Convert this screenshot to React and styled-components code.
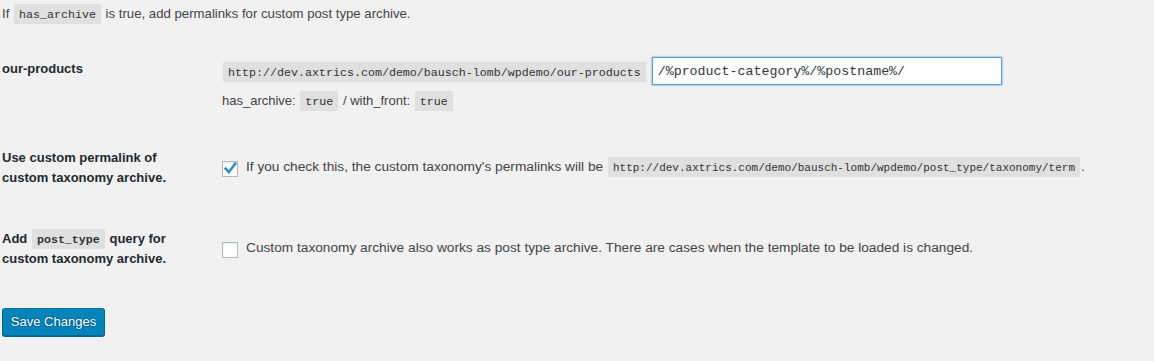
import React from "react";
import styled, { createGlobalStyle } from "styled-components";

const GlobalStyle = createGlobalStyle`
  html, body {
    margin: 0;
    background: #f1f1f1;
  }
  body {
    font-family: "Liberation Sans", Arial, sans-serif;
    font-size: 13px;
    color: #444;
  }
`;

const Page = styled.div`
  box-sizing: border-box;
  width: 1154px;
  min-height: 361px;
  padding: 0 0 0 2px;
`;

const Intro = styled.p`
  margin: 0;
  padding-top: 4px;
  font-size: 13.2px;
  line-height: 20px;
`;

const Code = styled.code`
  display: inline-block;
  vertical-align: top;
  font-family: "Liberation Mono", "DejaVu Sans Mono", monospace;
  font-size: ${(p) => p.$size || 11.67}px;
  line-height: 15px;
  padding: 4px 5px 1px;
  margin: ${(p) => p.$mt || 0}px 1px 0;
  background: rgba(0, 0, 0, 0.07);
  color: #333;
  white-space: nowrap;
`;

const Row = styled.div`
  display: grid;
  grid-template-columns: 220px 1fr;
  align-items: start;
  margin-top: ${(p) => p.$mt}px;
`;

const Th = styled.div`
  padding: ${(p) => p.$pt || 0}px 10px 0 0;
  font-size: 13px;
  font-weight: 700;
  line-height: 20px;
  color: #23282d;
`;

const Td = styled.div`
  padding-top: ${(p) => p.$pt || 0}px;
`;

const FieldLine = styled.div`
  display: flex;
  align-items: flex-start;
  gap: 5px;
`;

const TextInput = styled.input`
  box-sizing: border-box;
  width: 350px;
  height: 28px;
  margin: 0;
  padding: 0 5px;
  border: 1px solid #5b9dd9;
  box-shadow: 0 0 2px rgba(30, 140, 190, 0.8);
  background: #fff;
  color: #32373c;
  font-family: "Liberation Mono", "DejaVu Sans Mono", monospace;
  font-size: 13.3px;
  outline: none;
`;

const Description = styled.p`
  margin: 6px 0 0;
  font-size: 13px;
  line-height: 20px;
`;

const CheckLine = styled.label`
  display: flex;
  align-items: center;
  gap: 8px;
  font-size: 13.7px;
  line-height: 20px;
  color: #444;
  white-space: nowrap;
`;

const Box = styled.span`
  position: relative;
  box-sizing: border-box;
  flex: 0 0 16px;
  width: 16px;
  height: 16px;
  margin-top: 4px;
  border: 1px solid #b4b9be;
  background: #fff;
  box-shadow: inset 0 1px 2px rgba(0, 0, 0, 0.1);
`;

const CheckSvg = styled.svg`
  position: absolute;
  left: -1px;
  top: -1px;
  overflow: visible;
`;

const SaveButton = styled.button`
  box-sizing: border-box;
  display: block;
  width: 103px;
  height: 28px;
  margin: 39px 0 0;
  padding: 0 0 1px;
  border: 1px solid;
  border-color: #0073aa #006799 #006799;
  border-radius: 3px;
  background: #0085ba;
  box-shadow: 0 1px 0 #006799;
  color: #fff;
  font-family: "Liberation Sans", Arial, sans-serif;
  font-size: 13px;
  white-space: nowrap;
  text-shadow: 0 -1px 1px #006799, 1px 0 1px #006799, 0 1px 1px #006799,
    -1px 0 1px #006799;
  cursor: pointer;
`;

function Checkbox({ checked }) {
  return (
    <Box>
      {checked && (
        <CheckSvg width="16" height="16" viewBox="0 0 16 16">
          <path
            d="M3.6 7.6 L6.8 11.2 L13.2 2.8"
            fill="none"
            stroke="#1e8cbe"
            strokeWidth="2.4"
            strokeLinecap="square"
            strokeLinejoin="miter"
          />
        </CheckSvg>
      )}
    </Box>
  );
}

export default function App() {
  return (
    <>
      <GlobalStyle />
      <Page>
        <Intro>
          If <Code>has_archive</Code> is true, add permalinks for custom post
          type archive.
        </Intro>

        <Row $mt={33}>
          <Th $pt={2}>our-products</Th>
          <Td>
            <FieldLine>
              <Code $mt={5}>http://dev.axtrics.com/demo/bausch-lomb/wpdemo/our-products</Code>
              <TextInput
                type="text"
                defaultValue="/%product-category%/%postname%/"
              />
            </FieldLine>
            <Description>
              has_archive: <Code>true</Code> / with_front: <Code>true</Code>
            </Description>
          </Td>
        </Row>

        <Row $mt={37}>
          <Th>
            Use custom permalink of
            <br />
            custom taxonomy archive.
          </Th>
          <Td $pt={9}>
            <CheckLine>
              <Checkbox checked />
              <span>
                If you check this, the custom taxonomy's permalinks will be{" "}
                <Code $size={11}>
                  http://dev.axtrics.com/demo/bausch-lomb/wpdemo/post_type/taxonomy/term
                </Code>
                .
              </span>
            </CheckLine>
          </Td>
        </Row>

        <Row $mt={41}>
          <Th>
            Add <Code>post_type</Code> query for
            <br />
            custom taxonomy archive.
          </Th>
          <Td $pt={9}>
            <CheckLine>
              <Checkbox />
              <span>
                Custom taxonomy archive also works as post type archive. There
                are cases when the template to be loaded is changed.
              </span>
            </CheckLine>
          </Td>
        </Row>

        <SaveButton type="button">Save Changes</SaveButton>
      </Page>
    </>
  );
}
